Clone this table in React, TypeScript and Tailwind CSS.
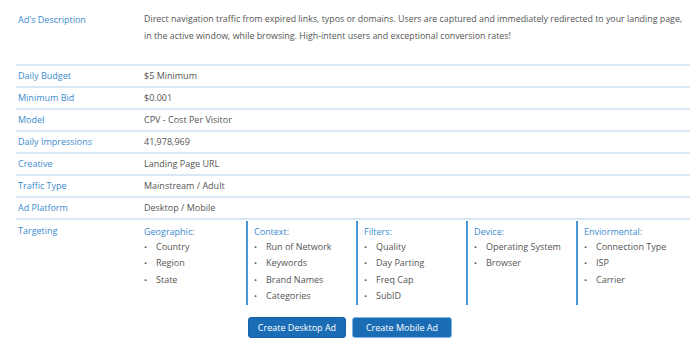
const rows: [string, string][] = [
  ["Daily Budget", "$5 Minimum"],
  ["Minimum Bid", "$0.001"],
  ["Model", "CPV - Cost Per Visitor"],
  ["Daily Impressions", "41,978,969"],
  ["Creative", "Landing Page URL"],
  ["Traffic Type", "Mainstream / Adult"],
  ["Ad Platform", "Desktop / Mobile"],
];

const targeting: { title: string; items: string[] }[] = [
  { title: "Geographic:", items: ["Country", "Region", "State"] },
  { title: "Context:", items: ["Run of Network", "Keywords", "Brand Names", "Categories"] },
  { title: "Filters:", items: ["Quality", "Day Parting", "Freq Cap", "SubID"] },
  { title: "Device:", items: ["Operating System", "Browser"] },
  { title: "Enviormental:", items: ["Connection Type", "ISP", "Carrier"] },
];

export default function App() {
  return (
    <div
      className="w-[700px] h-[356px] bg-white pl-4 pr-[10px] text-[9px] text-[#555]"
      style={{ fontFamily: '"Open Sans", sans-serif' }}
    >
      <div className="flex pt-[11px] pb-[19px] border-b-2 border-[#d9e8f4]">
        <div className="w-[128px] shrink-0 pl-[2px] leading-[17px] text-[#3b8bd0]">Ad's Description</div>
        <div className="leading-[17px] text-[8.85px]">
          Direct navigation traffic from expired links, typos or domains. Users are captured and immediately redirected to your landing page,
          in the active window, while browsing. High-intent users and exceptional conversion rates!
        </div>
      </div>

      {rows.map(([label, value]) => (
        <div key={label} className="flex h-[22px] items-center border-b-2 border-[#d9e8f4]">
          <div className="w-[128px] shrink-0 pl-[2px] text-[#3b8bd0]">{label}</div>
          <div>{value}</div>
        </div>
      ))}

      <div className="flex pt-[1px]">
        <div className="w-[128px] shrink-0 pl-[2px] pt-[3px] text-[#3b8bd0]">Targeting</div>
        <div className="flex">
          {targeting.map((col, i) => (
            <div
              key={col.title}
              className={
                i === 0
                  ? "w-[102px] h-[84px] pt-[3px]"
                  : "w-[110px] h-[84px] pt-[3px] pl-[6px] border-l-2 border-[#4a95d4]"
              }
            >
              <div className="text-[#3b8bd0] leading-[15px]">{col.title}</div>
              <ul>
                {col.items.map((item) => (
                  <li key={item} className="flex items-center leading-[16.4px]">
                    <span className="w-[12px] text-[8px]">•</span>
                    {item}
                  </li>
                ))}
              </ul>
            </div>
          ))}
        </div>
      </div>

      <div className="flex justify-center gap-[6px] mt-[12px] pr-[6px]">
        <button className="w-[98px] h-[21px] rounded-[3px] bg-[#1a6db5] border border-[#1762a6] text-white text-[9px]">
          Create Desktop Ad
        </button>
        <button className="w-[100px] h-[21px] rounded-[3px] bg-[#1a6db5] border border-[#7fb4e4] text-white text-[9px]">
          Create Mobile Ad
        </button>
      </div>
    </div>
  );
}
